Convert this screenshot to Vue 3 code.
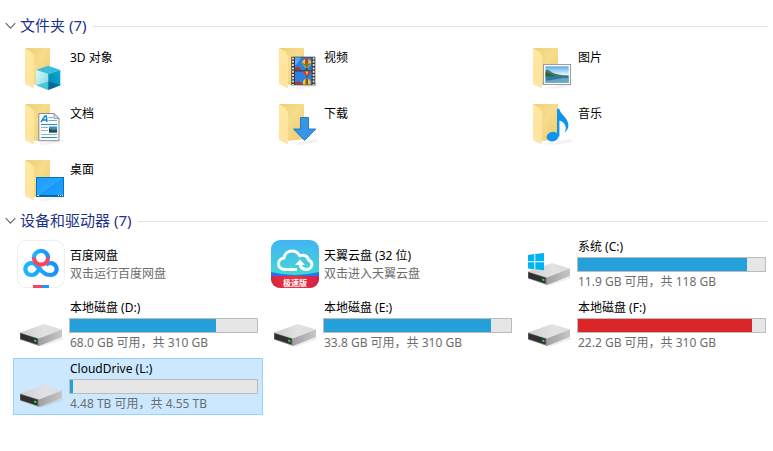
<script setup>
import { ref } from 'vue'

const filesOpen = ref(true)
const drivesOpen = ref(true)
const selected = ref('CloudDrive (L:)')

const folders = [
  { name: '3D 对象', kind: 'cube' },
  { name: '视频', kind: 'video' },
  { name: '图片', kind: 'picture' },
  { name: '文档', kind: 'document' },
  { name: '下载', kind: 'download' },
  { name: '音乐', kind: 'music' },
  { name: '桌面', kind: 'desktop' }
]

const devices = [
  { name: '百度网盘', kind: 'baidu', note: '双击运行百度网盘' },
  { name: '天翼云盘 (32 位)', kind: 'tianyi', note: '双击进入天翼云盘' },
  { name: '系统 (C:)', kind: 'system', used: 90.5, note: '11.9 GB 可用，共 118 GB' },
  { name: '本地磁盘 (D:)', kind: 'disk', used: 78, note: '68.0 GB 可用，共 310 GB' },
  { name: '本地磁盘 (E:)', kind: 'disk', used: 89.5, note: '33.8 GB 可用，共 310 GB' },
  { name: '本地磁盘 (F:)', kind: 'disk', used: 93, full: true, note: '22.2 GB 可用，共 310 GB' },
  { name: 'CloudDrive (L:)', kind: 'disk', used: 1.7, note: '4.48 TB 可用，共 4.55 TB' }
]
</script>

<template>
  <svg class="defs" aria-hidden="true">
    <defs>
      <linearGradient id="folderBack" x1="0" y1="0" x2="1" y2="1">
        <stop offset="0" stop-color="#efcf74" /><stop offset="0.45" stop-color="#f6dc8c" /><stop offset="1" stop-color="#ebcb70" />
      </linearGradient>
      <linearGradient id="folderFlap" x1="0" y1="0" x2="0" y2="1">
        <stop offset="0" stop-color="#ffe9a6" /><stop offset="0.7" stop-color="#ffe49a" /><stop offset="1" stop-color="#fbe6ae" />
      </linearGradient>
      <linearGradient id="cubeLeft" x1="0" y1="0" x2="1" y2="1">
        <stop offset="0" stop-color="#e2fafb" /><stop offset="1" stop-color="#6fd6e4" />
      </linearGradient>
      <linearGradient id="cubeRight" x1="0" y1="1" x2="1" y2="0">
        <stop offset="0" stop-color="#0485b0" /><stop offset="0.5" stop-color="#0598c4" /><stop offset="1" stop-color="#0ba7dc" />
      </linearGradient>
      <linearGradient id="sky" x1="0" y1="0" x2="0" y2="1">
        <stop offset="0" stop-color="#5aa8ea" /><stop offset="0.5" stop-color="#e2f3fb" />
      </linearGradient>
      <linearGradient id="driveTop" x1="0" y1="0" x2="1" y2="0">
        <stop offset="0" stop-color="#cfcfd0" /><stop offset="0.6" stop-color="#e2e2e4" /><stop offset="1" stop-color="#dcdcde" />
      </linearGradient>
      <linearGradient id="driveSide" x1="0" y1="0" x2="1" y2="0">
        <stop offset="0" stop-color="#a0a0a2" /><stop offset="1" stop-color="#c6c6c9" />
      </linearGradient>
      <linearGradient id="screen" x1="0" y1="0" x2="1" y2="1">
        <stop offset="0" stop-color="#1a9cfb" /><stop offset="0.5" stop-color="#27a6ff" /><stop offset="0.51" stop-color="#1598fb" /><stop offset="1" stop-color="#1ea4ff" />
      </linearGradient>
      <linearGradient id="ringBlue" x1="0" y1="0" x2="1" y2="0">
        <stop offset="0" stop-color="#1fb6ff" /><stop offset="1" stop-color="#1e90fb" />
      </linearGradient>
      <linearGradient id="cloudBg" x1="0" y1="0" x2="0" y2="1">
        <stop offset="0" stop-color="#41b5f4" /><stop offset="0.7" stop-color="#43d6d4" />
      </linearGradient>
      <linearGradient id="cloudRed" x1="0" y1="0" x2="1" y2="0">
        <stop offset="0" stop-color="#d9243f" /><stop offset="0.5" stop-color="#ef3340" /><stop offset="1" stop-color="#d41f4a" />
      </linearGradient>
      <clipPath id="tile"><rect width="48" height="48" rx="9" /></clipPath>
    </defs>
  </svg>

  <main class="explorer" lang="zh-CN">
    <section>
      <h2 class="group">
        <button type="button" class="toggle" :aria-expanded="filesOpen" @click="filesOpen = !filesOpen">
          <svg class="chevron" viewBox="0 0 11 8" aria-hidden="true"><path d="M.7 1.2 5.5 6.2 10.3 1.2" /></svg>
          <span class="label">文件夹 (7)</span>
        </button>
      </h2>
      <ul v-if="filesOpen" class="grid folders">
        <li v-for="f in folders" :key="f.name">
          <button type="button" class="item folder" :class="{ selected: selected === f.name }" @click="selected = f.name">
            <svg class="icon" viewBox="0 0 48 48" aria-hidden="true">
              <path d="M19 44 46 39 47 42 30 45Z" fill="#000" opacity=".05" />
              <path d="M8 4H33V39L17 41 8 39Z" fill="url(#folderBack)" />
              <path d="M8 4 15.3 8.4V10.5L17 11.5V43.4L15.6 44 8 40.3Z" fill="url(#folderFlap)" />

              <g v-if="f.kind === 'cube'">
                <path d="M31.3 21.7 43.3 26 31.3 30 19 26Z" fill="#35bfdc" />
                <path d="M19 26 31.3 30V46L19 41.3Z" fill="url(#cubeLeft)" />
                <path d="M31.3 30 43.3 26V41.3L31.3 46Z" fill="url(#cubeRight)" />
                <path d="M19 41.3 31.3 37.5V46Z" fill="#2cb6cd" opacity=".7" />
                <path d="M31.3 37.5 43.3 41.3 31.3 46Z" fill="#04597a" opacity=".65" />
              </g>

              <g v-else-if="f.kind === 'video'">
                <rect x="20.3" y="12.7" width="24" height="28.6" fill="#3a3a3a" />
                <path d="M22 13.5V41M42.6 13.5V41" stroke="#e4e4e4" stroke-width="1.8" stroke-dasharray="2 1.3" />
                <rect x="24" y="13.5" width="16.6" height="12.8" fill="#2f7fe0" />
                <rect x="24" y="27.5" width="16.6" height="13" fill="#2f7fe0" />
                <path d="M24 13.5H30L26 20 24 21Z" fill="#5fa8ee" />
                <path d="M24 24 27 22.8 31 26.3H24Z" fill="#b7332a" />
                <path d="M31.2 18.6A4.6 4.6 0 0 1 40.2 18.6C40.2 20.8 38.4 22 37.2 23.4H34.2C33 22 31.2 20.8 31.2 18.6Z" fill="#f6c92a" />
                <path d="M34.4 14.3H37L37.4 18.6 36.6 23.4H34.8L34 18.6Z" fill="#d2352a" />
                <path d="M31.4 18.4 34 20.2 35.7 18.6 37.4 20.2 40 18.4 39.4 20.6 37.2 22H34.2L32 20.6Z" fill="#4c8a3c" />
                <path d="M34.6 24.4H36.8V26.3H34.6Z" fill="#6b3b16" />
                <path d="M31.6 27.5H40.2L36.8 31.5H35Z" fill="#d82f27" />
                <path d="M34 27.5H37.5L36 31Z" fill="#f4c21f" />
                <path d="M35 32H36.6V33.4H35Z" fill="#6b3b16" />
                <path d="M24 38.5 27 37.2 30 38.8 32 40.5H24Z" fill="#b7332a" />
                <path d="M32 40.5V38.6A3.8 3.8 0 0 1 39.6 38.6V40.5Z" fill="#f6c92a" />
                <path d="M34.6 35H37V40.5H34.6Z" fill="#8a4f1f" />
              </g>

              <g v-else-if="f.kind === 'picture'">
                <rect x="18.5" y="20.5" width="27" height="20" fill="#fff" stroke="#979da3" />
                <rect x="20.5" y="22.3" width="23.2" height="16.4" fill="url(#sky)" />
                <path d="M20.5 26C24 25 25 28 29 29.2 33 30.5 36 31 43.7 31.5V33.2H20.5Z" fill="#3e7f69" />
                <path d="M20.5 28.5C24 28 26 31 32 32.6H20.5Z" fill="#2b6048" />
                <path d="M20.5 32.6H43.7V38.7H20.5Z" fill="#2f78a6" />
                <path d="M20.5 36.5C29 36.5 33 33.8 43.7 34V38.7H20.5Z" fill="#7fb7d0" opacity=".75" />
              </g>

              <g v-else-if="f.kind === 'document'">
                <path d="M21.8 13.5H37L42 18.5V40.7H21.8Z" fill="#fbfbfb" stroke="#858a8f" />
                <path d="M37 13.5V18.5H42Z" fill="#dfe1e3" stroke="#858a8f" stroke-width=".8" />
                <path d="M24 22 28 16H29.3L30 22M25.5 20H29.7" fill="none" stroke="#1583cf" stroke-width="1.4" />
                <path d="M31.5 17.5H36M31.5 20.5H40" stroke="#63b0dc" />
                <path d="M24 24.5H40M24 37.5H40" stroke="#1d93dc" stroke-width="1.2" />
                <path d="M24 27.5H31M24 30.5H31M24 34.5H40" stroke="#a6b0b8" />
                <rect x="32" y="26.5" width="8" height="6" fill="#3d8cc4" />
                <path d="M32 28.5 36 30 40 29.5V32.5H32Z" fill="#254d52" />
              </g>

              <path v-else-if="f.kind === 'download'" d="M29.5 17.5H37.5V29H44.8L33.6 40.4 22.4 29H29.5Z" fill="#3795e8" stroke="#1e73c0" stroke-width=".9" />

              <g v-else-if="f.kind === 'music'" fill="#0d94ef">
                <ellipse cx="27.6" cy="36.6" rx="6" ry="4.7" transform="rotate(-12 27.6 36.6)" />
                <path d="M32 8.7H34.4C35 14.5 43.4 17.5 43.4 25.5 43.4 28.5 41.8 31 39.4 32.6 41 29.5 41.4 27 39.6 24.2 38.2 21.8 36.5 20.8 34.4 20.4V36.5H32Z" />
              </g>

              <g v-else>
                <rect x="19.5" y="21.5" width="27" height="19" fill="url(#screen)" stroke="#0873bd" />
                <path d="M20 39H46V40.3H20Z" fill="#0a5f9e" />
                <path d="M20.5 39.5H22M41 39.5H42M43 39.5H44M45 39.5H46" stroke="#fff" />
              </g>
            </svg>
            <span class="name">{{ f.name }}</span>
          </button>
        </li>
      </ul>
    </section>

    <section>
      <h2 class="group">
        <button type="button" class="toggle" :aria-expanded="drivesOpen" @click="drivesOpen = !drivesOpen">
          <svg class="chevron" viewBox="0 0 11 8" aria-hidden="true"><path d="M.7 1.2 5.5 6.2 10.3 1.2" /></svg>
          <span class="label">设备和驱动器 (7)</span>
        </button>
      </h2>
      <ul v-if="drivesOpen" class="grid devices">
        <li v-for="d in devices" :key="d.name">
          <button type="button" class="item device" :class="{ selected: selected === d.name }" @click="selected = d.name">
            <svg v-if="d.kind === 'baidu'" class="icon" viewBox="0 0 48 48" aria-hidden="true">
              <rect x=".5" y=".5" width="47" height="47" rx="9" fill="#fff" stroke="#efeff1" />
              <g fill="none" stroke-width="4.2">
                <path d="M24 27C20 32.5 18.5 35 14.2 35A6 6 0 1 1 19 25.2L24 30.5C28 34 29.5 35 33.8 35A6 6 0 1 0 29 25.2" stroke="url(#ringBlue)" />
                <path d="M16.9 18A7.1 7.1 0 0 1 31.1 18" stroke="url(#ringBlue)" />
                <path d="M16.9 17.6A7.1 7.1 0 0 0 31.1 17.6" stroke="#f9445f" />
              </g>
              <path d="M16 45H25V48H16Z" fill="#f9445f" /><path d="M25 45H32V48H25Z" fill="#2196fb" />
            </svg>

            <svg v-else-if="d.kind === 'tianyi'" class="icon" viewBox="0 0 48 48" aria-hidden="true">
              <g clip-path="url(#tile)">
                <rect width="48" height="48" fill="url(#cloudBg)" />
                <path d="M0 32Q12 35 24 35T48 32V40H0Z" fill="#1e78f0" />
                <path d="M0 35Q10 35 24 37.5T48 35V40H0Z" fill="#7b46d8" />
                <path d="M0 36.5Q24 35 48 36.5V48H0Z" fill="url(#cloudRed)" />
              </g>
              <path d="M26 29.5H14.5C10 29.5 7.5 26.8 7.5 23.7 7.5 20.5 10 18.3 13 18 13.5 13.5 17 11 21 11 24.5 11 27.2 12.7 28.7 15.8 34 13.8 37.3 17.3 37.5 20 40.3 21 41 23.3 40.8 25 40.3 28 37.5 29.6 34.5 29.4 31.5 29 29.3 27 29 23.5" fill="none" stroke="#fff" stroke-width="3" stroke-linejoin="round" />
              <path d="M24 25 29 19.5 34 25Z" fill="#fff" />
              <text x="24" y="45.5" class="badge">极速版</text>
            </svg>

            <svg v-else class="icon" viewBox="0 0 48 48" aria-hidden="true">
              <path d="M22 45 45 36.5 46.5 38 25 45.5Z" fill="#000" opacity=".08" />
              <path d="M3 31.5 27 23 45 28.5 22.5 37.7Z" fill="url(#driveTop)" />
              <path d="M22 37.5 45 28.5V36L22 45Z" fill="url(#driveSide)" />
              <path d="M3 31.5 22 37.5V45L3 38.5Z" fill="#8b8b8e" />
              <path d="M3.4 32.2 20.6 37.8V43.6L3.4 38Z" fill="#303032" />
              <path d="M17.2 38.6 19.4 39.3V41.2L17.2 40.5Z" fill="#33e23d" />
              <path v-if="d.kind === 'system'" d="M3 15 9.3 14.1V21.2H3ZM10.3 14 19 13V21.2H10.3ZM3 22.2H9.3V29.2L3 28.4ZM10.3 22.2H19V30.2L10.3 29.2Z" fill="#00b4f1" />
            </svg>

            <span class="info">
              <span class="name">{{ d.name }}</span>
              <progress v-if="d.used" class="usage" :class="{ full: d.full }" max="100" :value="d.used" :aria-label="d.name"></progress>
              <span class="note">{{ d.note }}</span>
            </span>
          </button>
        </li>
      </ul>
    </section>
  </main>
</template>

<style>
body {
  background: #fff;
}
</style>

<style scoped>
.defs {
  position: absolute;
  width: 0;
  height: 0;
}
.explorer {
  padding-top: 13px;
  font-family: "Noto Sans", "Noto Sans CJK SC", sans-serif;
  font-size: 12px;
  line-height: 16px;
  color: #000;
}
button {
  border: 0;
  background: none;
  font: inherit;
  color: inherit;
  text-align: left;
}
.group {
  display: flex;
  align-items: center;
  gap: 7px;
  margin: 0;
  padding: 0 5px;
  font-size: 15px;
  font-weight: 400;
  line-height: 24px;
  color: #1e3287;
}
.group::after {
  content: "";
  flex: 1;
  height: 1px;
  background: #e2e2e2;
}
.toggle {
  display: flex;
  align-items: center;
  gap: 4px;
  padding: 0;
  white-space: nowrap;
}
.label {
  padding-bottom: 2px;
}
.chevron {
  width: 11px;
  height: 8px;
  fill: none;
  stroke: #6b6b6b;
  stroke-width: 1.2;
}
.grid {
  display: grid;
  grid-template-columns: repeat(3, minmax(0, 1fr));
  column-gap: 4px;
  margin: 0;
  padding: 1px 2px 0 13px;
  list-style: none;
}
.devices {
  row-gap: 4px;
  padding-top: 2px;
}
.item {
  display: flex;
  gap: 4px;
  width: 100%;
  border: 1px solid transparent;
  padding: 3px 4px 3px 3px;
}
.item.selected {
  border-color: #99d1ff;
  background: #cce8ff;
}
.icon {
  flex: none;
  width: 48px;
  height: 48px;
}
.name,
.note {
  padding-left: 1px;
  white-space: nowrap;
}
.folder .name {
  padding-top: 6px;
}
.device {
  min-height: 57px;
  padding-top: 2px;
  padding-bottom: 2px;
}
.device .icon {
  margin-top: 1px;
}
.info {
  display: flex;
  flex: 1;
  flex-direction: column;
  align-self: center;
  gap: 2px;
  min-width: 0;
}
.note {
  color: #6d6d6d;
}
.usage {
  display: block;
  box-sizing: border-box;
  width: 100%;
  height: 15px;
  border: 1px solid #bcbcbc;
  background: #e6e6e6;
  appearance: none;
}
.usage::-webkit-progress-bar {
  background: #e6e6e6;
}
.usage::-webkit-progress-value {
  background: #26a0da;
}
.usage.full::-webkit-progress-value {
  background: #da2626;
}
.badge {
  fill: #fff;
  font-size: 8px;
  font-weight: 700;
  text-anchor: middle;
}
</style>
